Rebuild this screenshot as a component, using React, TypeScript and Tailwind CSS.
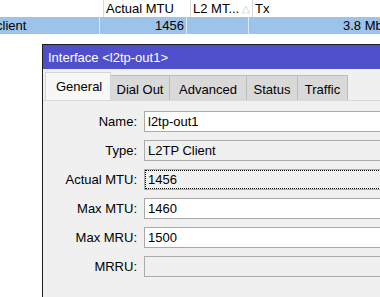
import React from "react";

const fields = [
  { label: "Name:", value: "l2tp-out1", kind: "edit" },
  { label: "Type:", value: "L2TP Client", kind: "ro" },
  { label: "Actual MTU:", value: "1456", kind: "focus" },
  { label: "Max MTU:", value: "1460", kind: "edit" },
  { label: "Max MRU:", value: "1500", kind: "edit" },
  { label: "MRRU:", value: "", kind: "ro" },
];

const tabs = [
  { name: "Dial Out", w: "w-[59px]" },
  { name: "Advanced", w: "w-[77px]" },
  { name: "Status", w: "w-[51px]" },
  { name: "Traffic", w: "w-[50px]" },
];

function Field({ label, value, kind }: { label: string; value: string; kind: string }) {
  let box = "bg-white border border-[#a9a9a9]";
  if (kind === "ro") box = "bg-[#f0f0f0] border border-[#acacac]";
  if (kind === "focus") box = "bg-[#f0f0f0] border border-[#acacac] outline outline-1 outline-dotted outline-black -outline-offset-2";
  return (
    <div className="flex items-center h-[21px]">
      <div className="w-[95px] shrink-0 text-right pr-px">{label}</div>
      <div className={`ml-[6px] w-[260px] h-[21px] shrink-0 flex items-center pl-[3px] ${box}`}>{value}</div>
    </div>
  );
}

export default function App() {
  return (
    <div className="w-[380px] h-[297px] overflow-hidden bg-white text-[13px] leading-none text-black font-['Liberation_Sans',Arial,sans-serif]">
      {/* list behind the dialog */}
      <div className="flex h-[17px] bg-white">
        <div className="w-[104px] shrink-0 border-r border-[#d9d9d9]"></div>
        <div className="w-[87px] shrink-0 border-r border-[#d9d9d9] flex items-center pl-[2px]">Actual MTU</div>
        <div className="w-[62px] shrink-0 border-r border-[#d9d9d9] flex items-center pl-[2px]">
          <span>L2 MT...</span>
          <span className="ml-[3px] text-[10px] text-[#c8c8c8]">△</span>
        </div>
        <div className="flex-1 flex items-center pl-[2px]">Tx</div>
      </div>
      <div className="flex h-[17px] bg-[#9cc3ea]">
        <div className="w-[104px] shrink-0 border-r border-[#dbe8f6] flex items-center -ml-[4px]">client</div>
        <div className="w-[87px] shrink-0 border-r border-[#dbe8f6] flex items-center justify-end pr-[2px]">1456</div>
        <div className="w-[62px] shrink-0 border-r border-[#dbe8f6]"></div>
        <div className="flex-1 flex items-center overflow-hidden whitespace-nowrap">
          <span className="ml-[94px]">3.8 Mbps</span>
        </div>
      </div>

      {/* dialog window */}
      <div className="ml-[42px] mt-[10px] w-[360px] h-[300px] border-l border-t border-[#1e1e1e] bg-[#f0f0f0]">
        <div className="h-[24px] bg-[#4f4fcb] text-white flex items-center pl-[5px] pt-[1px]">Interface &lt;l2tp-out1&gt;</div>
        <div className="flex items-end h-[32px] pl-[2px] border-b border-[#dadada]">
          <div className="h-[28px] w-[66px] bg-[#f7f7f7] border border-b-0 border-[#d5d5d5] flex items-center pl-[10px] pb-[1px]">General</div>
          {tabs.map((t) => (
            <div key={t.name} className={`h-[25px] ${t.w} bg-[#d9d9d9] border border-l-0 border-b-0 border-[#bdbdbd] flex items-center justify-center pt-[2px]`}>
              {t.name}
            </div>
          ))}
        </div>
        <div className="flex flex-col gap-[8px] pt-[10px]">
          {fields.map((f) => (
            <Field key={f.label} {...f} />
          ))}
        </div>
      </div>
    </div>
  );
}
